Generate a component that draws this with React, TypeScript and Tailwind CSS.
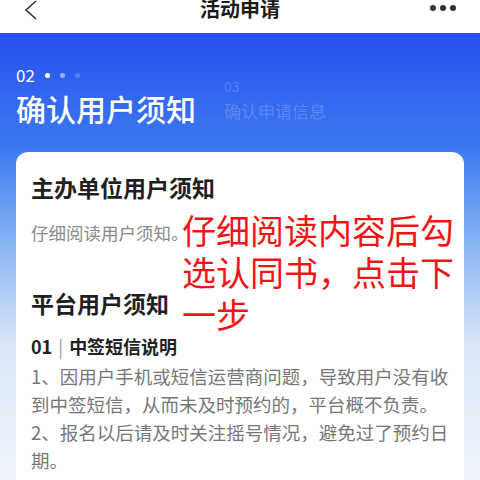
const font = { fontFamily: '"Noto Sans CJK SC", "Noto Sans", sans-serif' };

export default function App() {
  return (
    <div className="w-[480px] h-[480px] overflow-hidden bg-[#f0f4fa]" style={font}>
      {/* 顶部导航 */}
      <div className="h-[33px] bg-white relative">
        <div className="h-[20px] flex items-center justify-between px-6">
          <svg width="14" height="20" viewBox="0 0 14 20">
            <polyline points="12,1 2,10 12,19" fill="none" stroke="#333" strokeWidth="1.6" />
          </svg>
          <div className="flex gap-[4px] items-center -mt-[5px]">
            <span className="w-[6px] h-[6px] rounded-full bg-[#333]" />
            <span className="w-[6px] h-[6px] rounded-full bg-[#333]" />
            <span className="w-[6px] h-[6px] rounded-full bg-[#333]" />
          </div>
        </div>
        <div className="absolute left-0 right-0 top-[-3px] text-center text-[20px] leading-[24px] font-bold text-[#1a1a1a]">
          活动申请
        </div>
      </div>

      {/* 蓝色背景区域 */}
      <div className="h-[447px] bg-[linear-gradient(180deg,#2650ef_0%,#3c7af0_26%,#8cb6f4_48%,#dbe7f9_70%,#f0f4fa_100%)]">
        <div className="flex items-end pl-4 pt-[33px]">
          <div>
            <div className="flex items-center h-[18px]">
              <span className="text-white text-[17px] leading-[18px]">02</span>
              <span className="ml-[10px] w-[5px] h-[5px] rounded-full bg-white" />
              <span className="ml-[10px] w-[5px] h-[5px] rounded-full bg-white/50" />
              <span className="ml-[10px] w-[5px] h-[5px] rounded-full bg-white/20" />
            </div>
            <div className="text-white text-[30px] leading-[40px] mt-[4px] font-medium">确认用户须知</div>
          </div>
          <div className="ml-[28px] pb-[5px] text-white/20">
            <div className="text-[14px] leading-[18px]">03</div>
            <div className="text-[17px] leading-[24px] mt-[4px]">确认申请信息</div>
          </div>
        </div>

        {/* 卡片 */}
        <div className="relative mx-4 mt-[24px] bg-white rounded-xl px-[15px] pt-5 pb-6 h-[400px]">
          <div className="text-[23px] leading-[30px] font-bold text-[#1f1f1f]">主办单位用户须知</div>
          <div className="text-[17.5px] leading-[24px] mt-[19px] text-[#8a8a8a]">仔细阅读用户须知。</div>
          <div className="text-[23px] leading-[30px] font-bold text-[#1f1f1f] mt-[43px]">平台用户须知</div>
          <div className="text-[18px] leading-[26px] font-semibold text-[#222] mt-[15px]">
            01<span className="mx-[6px] font-normal text-[#999]">|</span>中签短信说明
          </div>
          <div className="text-[18.5px] leading-[28px] mt-[3px] text-[#777] whitespace-nowrap">
            1、因用户手机或短信运营商问题，导致用户没有收
            <br />
            到中签短信，从而未及时预约的，平台概不负责。
            <br />
            2、报名以后请及时关注摇号情况，避免过了预约日
            <br />
            期。
          </div>

          {/* 标注 */}
          <div className="absolute left-[166px] top-[57px] w-[290px] text-[34px] leading-[42px] text-[#f01515]">
            仔细阅读内容后勾
            <br />
            选认同书，点击下
            <br />
            一步
          </div>
        </div>
      </div>
    </div>
  );
}
